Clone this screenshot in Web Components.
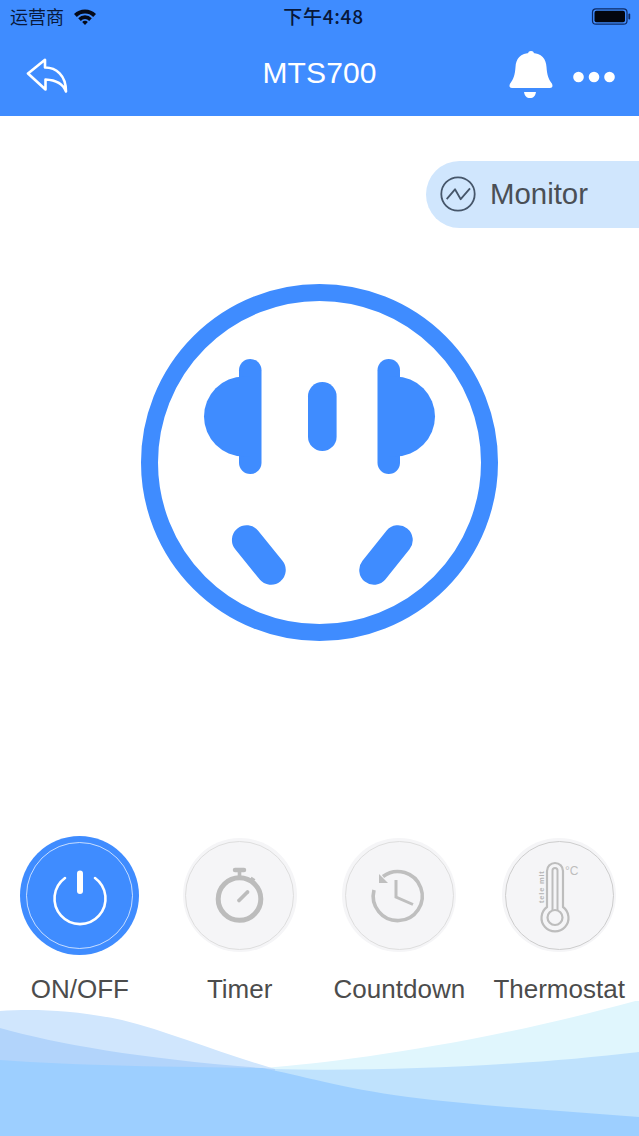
<!DOCTYPE html>
<html>
<head>
<meta charset="utf-8">
<title>MTS700</title>
<style>
    html, body { margin: 0; background: #fff; }
    body { width: 639px; height: 1136px; overflow: hidden; font-family: "Liberation Sans", "Noto Sans CJK SC", sans-serif; }
</style>
</head>
<body>
<status-bar carrier="运营商" time="下午4:48"></status-bar>
<nav-bar title-text="MTS700"></nav-bar>
<monitor-pill label="Monitor"></monitor-pill>
<socket-face></socket-face>
<control-row>
    <control-button label="ON/OFF" active>
        <svg viewBox="0 0 120 120" width="120" height="120" fill="none" stroke="#fff" stroke-linecap="round">
            <path d="M45 43A25.5 25.5 0 1 0 75 43" stroke-width="2.6"/>
            <path d="M60 38.5V56" stroke-width="6"/>
        </svg>
    </control-button>
    <control-button label="Timer">
        <svg viewBox="0 0 120 120" width="120" height="120" fill="none" stroke="#bcbcbc">
            <circle cx="59.5" cy="64" r="21.3" stroke-width="5"/>
            <path d="M55 35H64" stroke-width="4.5" stroke-linecap="round"/>
            <path d="M59.5 35V42" stroke-width="3.6"/>
            <path d="M70.5 47.5L73.5 43" stroke-width="4.5"/>
            <path d="M59 65.5L67.5 57" stroke-width="3.8" stroke-linecap="round"/>
        </svg>
    </control-button>
    <control-button label="Countdown">
        <svg viewBox="0 0 120 120" width="120" height="120" fill="none" stroke="#bfbfbf">
            <path d="M44 41.5A24.5 24.5 0 1 1 35 55" stroke-width="3.6"/>
            <path d="M40 39V48H49Z" fill="#bfbfbf" stroke="none"/>
            <path d="M57 45V62L74 69.5" stroke-width="3"/>
        </svg>
    </control-button>
    <control-button label="Thermostat" dark-ring>
        <svg viewBox="0 0 120 120" width="120" height="120" fill="none" stroke="#bdbdbd" stroke-width="2.2">
            <path d="M48 72V36A8 8 0 0 1 64 36V72A13.5 13.5 0 1 1 48 72Z"/>
            <circle cx="56" cy="82.5" r="7.5"/>
            <path d="M53.5 75V35.5A2.5 2.5 0 0 1 58.5 35.5V75" stroke-width="2"/>
            <text x="66" y="40" font-size="12" fill="#bdbdbd" stroke="none" font-family="Liberation Sans">°C</text>
            <text transform="translate(45 68) rotate(-90)" font-size="7.5" letter-spacing=".8" font-weight="700" fill="#b5b5b5" stroke="none" font-family="Liberation Sans">tele mit</text>
        </svg>
    </control-button>
</control-row>
<wave-footer></wave-footer>

<script>
    const BLUE = '#3f8cff';

    customElements.define('status-bar', class extends HTMLElement {
        connectedCallback() {
            this.attachShadow({ mode: 'open' }).innerHTML = `
            <style>
                :host {
                    display: grid;
                    grid-template-columns: 1fr auto 1fr;
                    align-items: center;
                    height: 34px;
                    padding: 0 8px 0 10px;
                    background: ${BLUE};
                    color: #08183a;
                    font: 18px/32px "Liberation Sans", "Noto Sans CJK SC", sans-serif;
                }
                .left { display: flex; align-items: center; gap: 10px; }
                .right { display: flex; justify-content: flex-end; }
                .time {
                    font-family: "Noto Sans CJK SC", sans-serif;
                    font-size: 19px;
                    letter-spacing: .7px;
                    font-weight: 500;
                    margin: 0 0 4px 6px;
                }
                .wifi { margin-bottom: 3px; }
                .battery { margin-bottom: 4px; }
                svg { display: block; }
            </style>
            <div class="left">
                <span>${this.getAttribute('carrier')}</span>
                <svg class="wifi" width="22" height="16" viewBox="0 0 22 16">
                    <path d="M0 5A15.5 15.5 0 0 1 22 5L19.2 8A11.5 11.5 0 0 0 2.8 8Z" fill="#050a18"/>
                    <path d="M4.2 9.2A9.4 9.4 0 0 1 17.8 9.2L15.2 12A5.6 5.6 0 0 0 6.8 12Z" fill="#050a18"/>
                    <path d="M8.2 13A3.9 3.9 0 0 1 13.8 13L11 16Z" fill="#050a18"/>
                </svg>
            </div>
            <span class="time">${this.getAttribute('time')}</span>
            <div class="right">
                <svg class="battery" width="40" height="17" viewBox="0 0 40 17">
                    <rect x="1.5" y="0.8" width="34.5" height="15.4" rx="3.5" fill="none" stroke="#0d2a66" stroke-width="1.2"/>
                    <rect x="3.5" y="2.8" width="30.5" height="11.4" rx="2" fill="#03060f"/>
                    <rect x="37.4" y="5.5" width="1.8" height="6" rx="0.9" fill="#0d2a66"/>
                </svg>
            </div>`;
        }
    });

    customElements.define('nav-bar', class extends HTMLElement {
        connectedCallback() {
            this.attachShadow({ mode: 'open' }).innerHTML = `
            <style>
                :host {
                    display: grid;
                    grid-template-columns: 1fr auto 1fr;
                    align-items: center;
                    height: 82px;
                    box-sizing: border-box;
                    padding: 0 24px 4px 24px;
                    background: ${BLUE};
                }
                .title { color: #fff; font: 30px/36px "Liberation Sans", sans-serif; letter-spacing: .1px; }
                .back { margin: 6px 0 0 2px; }
                .actions { display: flex; align-items: center; justify-content: flex-end; gap: 20px; margin-top: 7px; }
                .bell { margin-bottom: 3px; }
                svg { display: block; }
            </style>
            <svg class="back" width="44" height="36" viewBox="0 0 44 36" fill="none" stroke="#fff" stroke-width="2.6" stroke-linejoin="round">
                <path d="M2 15.5L19 1.8V9.5C30 9.5 40 17 40 33.5C37 25.5 30 22 19.5 21.5V31.5Z"/>
            </svg>
            <span class="title">${this.getAttribute('title-text')}</span>
            <div class="actions">
                <svg class="bell" width="44" height="48" viewBox="0 0 44 48" fill="#fff">
                    <circle cx="22" cy="3" r="3"/>
                    <path d="M22 2C11 2 7 8 6.5 16C6 24 4.5 28 1.5 32C0 34 0 37 3 37H41C44 37 44 34 42.5 32C39.5 28 38 24 37.5 16C37 8 33 2 22 2Z"/>
                    <path d="M15 41H27C26.2 45 24.5 47 21 47C17.5 47 15.8 45 15 41Z"/>
                </svg>
                <svg width="42" height="12" viewBox="0 0 42 12" fill="#fff">
                    <circle cx="5.5" cy="6" r="5.3"/>
                    <circle cx="21" cy="6" r="5.3"/>
                    <circle cx="36.5" cy="6" r="5.3"/>
                </svg>
            </div>`;
        }
    });

    customElements.define('monitor-pill', class extends HTMLElement {
        connectedCallback() {
            this.attachShadow({ mode: 'open' }).innerHTML = `
            <style>
                :host { display: flex; justify-content: flex-end; margin-top: 45px; }
                .pill {
                    width: 213px;
                    height: 67px;
                    box-sizing: border-box;
                    padding-left: 14px;
                    display: flex;
                    align-items: center;
                    gap: 14px;
                    border-radius: 33.5px 0 0 33.5px;
                    background: #d0e6fd;
                    color: #4a4f55;
                    font: 29.4px "Liberation Sans", sans-serif;
                }
                .pill span { margin-bottom: 2px; }
                .pill svg { margin-bottom: 1px; }
                svg { display: block; }
            </style>
            <div class="pill">
                <svg width="36" height="36" viewBox="0 0 36 36" fill="none" stroke="#46566a" stroke-width="1.8">
                    <circle cx="18" cy="18" r="16.7"/>
                    <path d="M6.7 23.2L15 13.3L20.7 23.2L30 12.3" stroke-linejoin="round"/>
                </svg>
                <span>${this.getAttribute('label')}</span>
            </div>`;
        }
    });

    customElements.define('socket-face', class extends HTMLElement {
        connectedCallback() {
            this.attachShadow({ mode: 'open' }).innerHTML = `
            <style>
                :host { display: flex; justify-content: center; margin-top: 56px; }
                svg { display: block; }
            </style>
            <svg width="359" height="359" viewBox="140 284 359 359" fill="${BLUE}">
                <circle cx="319.5" cy="462.5" r="170" fill="none" stroke="${BLUE}" stroke-width="17"/>
                <!-- left and right pins -->
                <rect x="239" y="359" width="22.5" height="115" rx="11.25"/>
                <path d="M250 376.5H244A40 40 0 0 0 244 456.5H250Z"/>
                <rect x="377.5" y="359" width="22.5" height="115" rx="11.25"/>
                <path d="M389 376.5H395A40 40 0 0 1 395 456.5H389Z"/>
                <rect x="308" y="382" width="28.6" height="69" rx="14.3"/>
                <!-- bottom slots -->
                <path d="M246.7 540L271 570M398 540L374 570" fill="none" stroke="${BLUE}" stroke-width="29.5" stroke-linecap="round"/>
            </svg>`;
        }
    });

    customElements.define('control-row', class extends HTMLElement {
        connectedCallback() {
            this.attachShadow({ mode: 'open' }).innerHTML = `
            <style>
                :host { display: grid; grid-template-columns: repeat(4, 1fr); margin-top: 192px; }
            </style>
            <slot></slot>`;
        }
    });

    customElements.define('control-button', class extends HTMLElement {
        connectedCallback() {
            const active = this.hasAttribute('active');
            const ring = active ? 'rgba(255,255,255,.7)' : (this.hasAttribute('dark-ring') ? '#cdcdcd' : '#dedede');
            this.attachShadow({ mode: 'open' }).innerHTML = `
            <style>
                :host { display: flex; flex-direction: column; align-items: center; gap: 23px; padding-bottom: 1px; }
                .box { position: relative; width: 120px; height: 120px; }
                .box::before {
                    content: "";
                    position: absolute;
                    inset: ${active ? .5 : 3}px;
                    border-radius: 50%;
                    background: ${active ? BLUE : '#f5f5f7'};
                }
                .box::after {
                    content: "";
                    position: absolute;
                    inset: ${active ? 6.5 : 5.5}px;
                    border-radius: 50%;
                    border: ${active ? 1 : 1.5}px solid ${ring};
                }
                ::slotted(svg) { display: block; position: relative; z-index: 1; }
                .label { color: #4c4c4c; font: 26px/22px "Liberation Sans", sans-serif; white-space: nowrap; }
            </style>
            <div class="box"><slot></slot></div>
            <span class="label">${this.getAttribute('label')}</span>`;
        }
    });

    customElements.define('wave-footer', class extends HTMLElement {
        connectedCallback() {
            this.attachShadow({ mode: 'open' }).innerHTML = `
            <style>
                :host { display: block; height: 135px; }
                svg { display: block; }
            </style>
            <svg width="639" height="135" viewBox="0 1001 639 135">
                <path d="M265 1068C340 1062 480 1044 639 1000V1136H265Z" fill="#e0f6fd"/>
                <path d="M270 1069C380 1072 520 1066 639 1052V1136H270Z" fill="#bfe2fd"/>
                <path d="M0 1011C30 1009 70 1009 122 1020C170 1032 220 1053 275 1069V1136H0Z" fill="#d0e6fd"/>
                <path d="M0 1028C60 1045 150 1060 275 1069V1136H0Z" fill="#b2d4fb"/>
                <path d="M0 1060C80 1066 180 1067 262 1068C300 1075 340 1088 408 1097C480 1106 560 1111 639 1117V1136H0Z" fill="#9dcfff"/>
            </svg>`;
        }
    });
</script>
</body>
</html>
